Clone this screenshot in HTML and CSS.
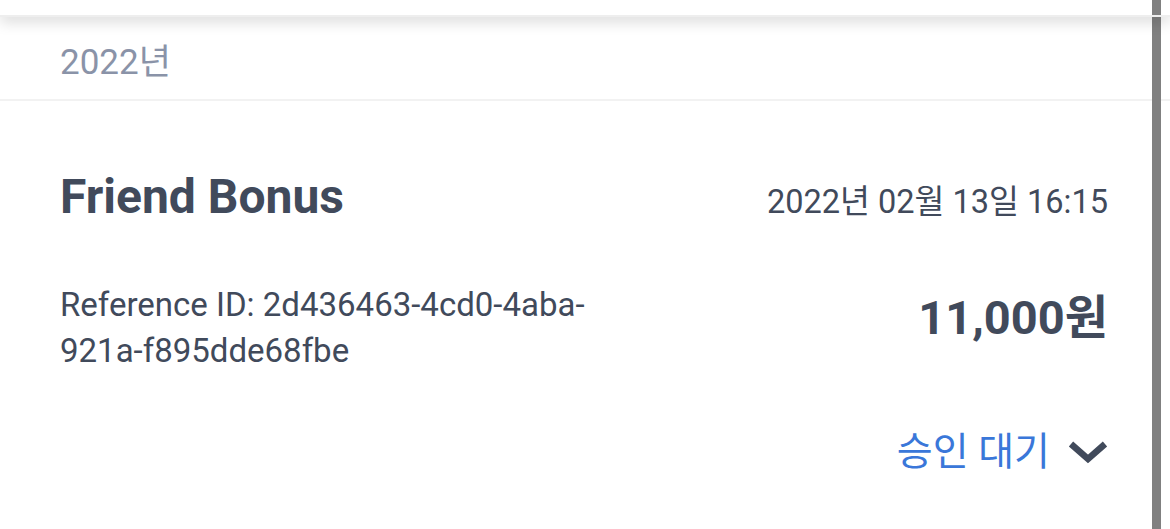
FILE: index.html
```html
<!DOCTYPE html>
<html lang="ko">
<head>
  <meta charset="UTF-8">
  <meta name="viewport" content="width=device-width, initial-scale=1.0">
  <title>Rewards History</title>
  <link rel="stylesheet" href="styles.css">
</head>
<body>
  <div class="topbar"></div>

  <div class="year-head">2022년</div>

  <div class="entry">
    <div class="entry-top">
      <h2 class="entry-title">Friend Bonus</h2>
      <span class="entry-date">2022년 02월 13일 16:15</span>
    </div>

    <div class="entry-mid">
      <p class="entry-ref">Reference ID: 2d436463-4cd0-4aba-921a-f895dde68fbe</p>
      <span class="entry-amount">11,000원</span>
    </div>

    <div class="entry-status">
      <span class="status-text">승인 대기</span>
      <svg class="chevron" width="40" height="24" viewBox="0 0 40 24">
        <polyline points="3,4 20,19 37,4" fill="none" stroke="#414a5b" stroke-width="6.5" stroke-linejoin="miter"/>
      </svg>
    </div>
  </div>

  <div class="scrollbar"></div>
</body>
</html>
```

FILE: styles.css
```css
body { margin: 0; background: #fff; font-family: Roboto, "Noto Sans CJK KR", sans-serif; color: #414a5b; overflow: hidden; }

.topbar { position: relative; z-index: 2; height: 15px; border-bottom: 2px solid #eeeeee; box-shadow: 0 6px 14px rgba(0, 0, 0, 0.13); }

.year-head { height: 82px; display: flex; align-items: center; padding-left: 60px; font-size: 35px; color: #8a93a8; border-bottom: 2px solid #f2f2f2; }

.entry { padding: 68px 62px 0 60px; }
.entry-top { display: flex; justify-content: space-between; align-items: baseline; }
.entry-title { margin: 0; font-size: 48px; line-height: 56px; font-weight: 700; }
.entry-date { font-size: 32.5px; margin-bottom: 2px; }

.entry-mid { display: flex; justify-content: space-between; align-items: flex-start; margin-top: 57px; }
.entry-ref { margin: 0; width: 560px; font-size: 33px; line-height: 46px; }
.entry-amount { margin-top: 8px; font-size: 47px; line-height: 56px; font-weight: 700; }

.entry-status { display: flex; justify-content: flex-end; align-items: center; margin-top: 54px; }
.status-text { font-size: 39px; line-height: 48px; color: #3a77d9; }
.chevron { margin-left: 18px; }

.scrollbar { position: absolute; top: 0; bottom: 0; right: 9px; width: 9px; background: #808080; z-index: 1; }
```
